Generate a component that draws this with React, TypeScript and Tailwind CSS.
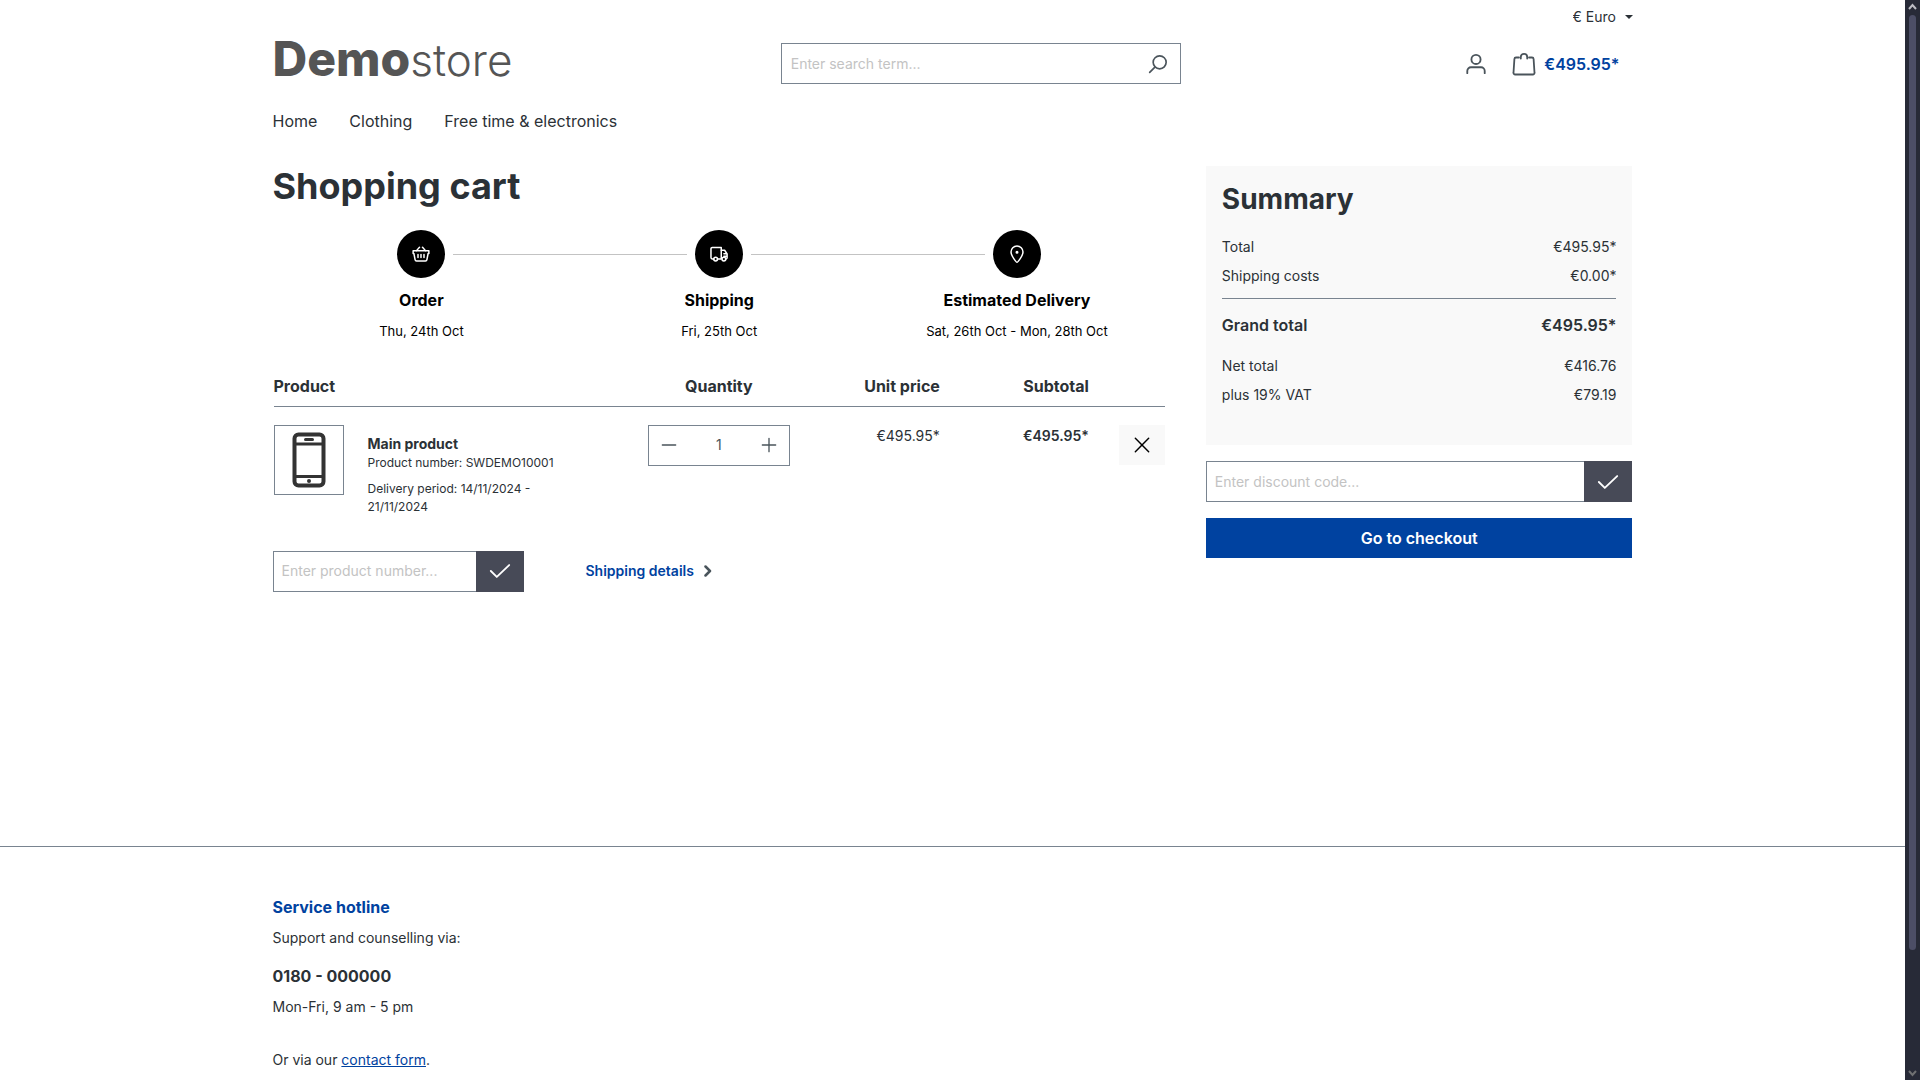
import { useState } from "react";
import type { ReactNode, SVGProps } from "react";

const Icon = ({
  size = 22,
  children,
  ...props
}: { size?: number; children: ReactNode } & SVGProps<SVGSVGElement>) => (
  <svg
    width={size}
    height={size}
    viewBox="0 0 24 24"
    fill="none"
    stroke="currentColor"
    strokeWidth="2"
    strokeLinecap="round"
    strokeLinejoin="round"
    aria-hidden="true"
    {...props}
  >
    {children}
  </svg>
);

const SearchIcon = () => (
  <Icon size={20}>
    <circle cx="14" cy="10" r="7.8" />
    <path d="M8.3 15.7L2 22" />
  </Icon>
);

const AvatarIcon = () => (
  <Icon>
    <circle cx="12" cy="7" r="5" />
    <path d="M2.5 22v-2.5a4 4 0 0 1 4-4h11a4 4 0 0 1 4 4V22" />
  </Icon>
);

const BagIcon = () => (
  <Icon size={24} strokeWidth="1.8">
    <path d="M7 5.5H4A1.6 1.6 0 0 0 2.4 7L1.5 20.7a1.6 1.6 0 0 0 1.6 1.8h17.8a1.6 1.6 0 0 0 1.6-1.8L21.6 7A1.6 1.6 0 0 0 20 5.5h-3" />
    <path d="M8.8 6.5V5a3.2 3.2 0 0 1 6.4 0v1.5" />
  </Icon>
);

const BasketIcon = () => (
  <Icon size={18}>
    <path d="M1.5 7.5h21v3.7h-1l-1.6 8.3a2 2 0 0 1-2 1.7H6.1a2 2 0 0 1-2-1.7L2.5 11.2h-1z" />
    <path d="M6 7.5L10 3M18 7.5L14 3M8 12.5v4M12 12.5v4M16 12.5v4" />
  </Icon>
);

const TruckIcon = () => (
  <Icon size={18}>
    <path d="M5 18.5H3a1.7 1.7 0 0 1-1.7-1.7V5A1.7 1.7 0 0 1 3 3.3h12v15.2h-5" />
    <path d="M15 7h4.5l3.3 5v5a1.5 1.5 0 0 1-1 1.5M18.5 11.5h4M18.5 15h4" />
    <circle cx="7.5" cy="18.8" r="2.5" />
    <circle cx="18.5" cy="18.8" r="2.5" />
  </Icon>
);

const PinIcon = () => (
  <Icon size={18}>
    <path d="M12 23C11.2 23 4 14.5 4 9.3a8 8 0 0 1 16 0C20 14.5 12.8 23 12 23z" />
    <circle cx="12" cy="9.5" r="1" />
  </Icon>
);

const CheckIcon = () => (
  <Icon>
    <path d="M2 12l6.5 6.5L22 5.5" />
  </Icon>
);

const PhoneIcon = () => (
  <svg width="34" height="56" viewBox="0 0 34 56" fill="none" stroke="#333" aria-hidden="true">
    <rect x="2.5" y="2.5" width="29" height="51" rx="4" strokeWidth="4" />
    <path d="M2 12h30M2 44.5h30" strokeWidth="3" />
    <path d="M13.5 7.5h7" strokeWidth="3" strokeLinecap="round" />
    <circle cx="17" cy="49" r="2" fill="#333" stroke="none" />
  </svg>
);

const steps = [
  { title: "Order", date: "Thu, 24th Oct", icon: <BasketIcon /> },
  { title: "Shipping", date: "Fri, 25th Oct", icon: <TruckIcon /> },
  { title: "Estimated Delivery", date: "Sat, 26th Oct - Mon, 28th Oct", icon: <PinIcon /> },
];

interface CodeFieldProps {
  placeholder: string;
  label: string;
  buttonLabel: string;
}

const CodeField = ({ placeholder, label, buttonLabel }: CodeFieldProps) => (
  <form className="flex h-[41px]" onSubmit={(e) => e.preventDefault()}>
    <input
      type="text"
      aria-label={label}
      placeholder={placeholder}
      className="min-w-0 flex-1 border border-r-0 border-[#798490] px-2 text-sm outline-none placeholder:text-[#c3c3c3]"
    />
    <button
      type="submit"
      aria-label={buttonLabel}
      className="flex w-12 items-center justify-center bg-[#474a57] text-white"
    >
      <CheckIcon />
    </button>
  </form>
);

const Header = () => (
  <header className="mx-auto max-w-[1400px] px-5">
    <div className="flex h-[34px] items-center justify-end gap-2">
      <select aria-label="Currency" className="appearance-none bg-transparent text-sm outline-none">
        <option>€ Euro</option>
      </select>
      <span className="border-x-4 border-t-4 border-x-transparent border-t-[#2b3136]" />
    </div>
    <div className="grid h-[58px] grid-cols-[9fr_400px_8fr] items-center">
      <a href="#" className="pb-2 text-5xl leading-[50px] text-[#555]">
        <span className="font-extrabold">Demo</span>
        <span className="text-[44px] font-light">store</span>
      </a>
      <form
        className="flex h-[41px] border border-[#798490]"
        onSubmit={(e) => e.preventDefault()}
      >
        <input
          type="search"
          aria-label="Search"
          placeholder="Enter search term..."
          className="min-w-0 flex-1 px-[9px] text-sm outline-none placeholder:text-[#c3c3c3]"
        />
        <button type="submit" aria-label="Submit search" className="px-3 text-[#4a545b]">
          <SearchIcon />
        </button>
      </form>
      <div className="flex items-center justify-end gap-[25px] pr-[13px] text-[#4a545b]">
        <button aria-label="Your account">
          <AvatarIcon />
        </button>
        <a href="#" className="flex items-center gap-2">
          <BagIcon />
          <span className="font-semibold text-[#0042a0]">€495.95*</span>
        </a>
      </div>
    </div>
    <nav className="flex gap-8 pt-[17px] leading-6">
      <a href="#">Home</a>
      <a href="#">Clothing</a>
      <a href="#">Free time &amp; electronics</a>
    </nav>
  </header>
);

const Steps = () => (
  <ol className="grid grid-cols-3 text-center text-black">
    {steps.map((step, i) => (
      <li key={step.title}>
        <div className="flex items-center gap-2">
          <span className={`h-px flex-1 ${i > 0 ? "bg-[#c3c3c3]" : ""}`} />
          <span className="flex size-12 items-center justify-center rounded-full bg-black text-white">
            {step.icon}
          </span>
          <span className={`h-px flex-1 ${i < steps.length - 1 ? "bg-[#c3c3c3]" : ""}`} />
        </div>
        <h2 className="pt-2.5 font-bold leading-6">{step.title}</h2>
        <p className="pt-2 text-[13px] leading-[22px]">{step.date}</p>
      </li>
    ))}
  </ol>
);

const CartTable = () => {
  const [quantity, setQuantity] = useState(1);

  return (
    <table className="w-full table-fixed">
      <colgroup>
        <col />
        <col className="w-[172px]" />
        <col className="w-[150px]" />
        <col className="w-[149px]" />
        <col className="w-[61px]" />
      </colgroup>
      <thead>
        <tr className="h-8 border-b border-[#798490] align-top leading-6">
          <th className="text-left font-bold">Product</th>
          <th className="font-bold">Quantity</th>
          <th className="pr-[15px] text-right font-bold">Unit price</th>
          <th className="pr-[15px] text-right font-bold">Subtotal</th>
          <td />
        </tr>
      </thead>
      <tbody>
        <tr className="align-top text-sm">
          <td className="pt-[18px]">
            <div className="flex gap-6">
              <div className="flex size-[70px] shrink-0 items-center justify-center border border-[#798490]">
                <PhoneIcon />
              </div>
              <div className="w-[200px] pt-[9px] text-xs leading-[18px]">
                <a href="#" className="block text-sm font-bold leading-5">
                  Main product
                </a>
                <p>Product number: SWDEMO10001</p>
                <p className="pt-2">Delivery period: 14/11/2024 - 21/11/2024</p>
              </div>
            </div>
          </td>
          <td className="px-[15px] pt-[18px]">
            <div className="flex h-[41px] border border-[#798490] text-[#4a545b]">
              <button
                aria-label="Decrease quantity"
                className="flex w-10 shrink-0 items-center justify-center"
                onClick={() => setQuantity(Math.max(1, quantity - 1))}
              >
                <Icon size={16}>
                  <path d="M2 12h20" />
                </Icon>
              </button>
              <input
                type="text"
                aria-label="Quantity"
                className="min-w-0 flex-1 text-center text-sm outline-none"
                value={quantity}
                onChange={(e) => setQuantity(Number(e.target.value) || 1)}
              />
              <button
                aria-label="Increase quantity"
                className="flex w-10 shrink-0 items-center justify-center"
                onClick={() => setQuantity(quantity + 1)}
              >
                <Icon size={16}>
                  <path d="M2 12h20M12 2v20" />
                </Icon>
              </button>
            </div>
          </td>
          <td className="pr-[15px] pt-[18px] text-right leading-[22px]">€495.95*</td>
          <td className="pr-[15px] pt-[18px] text-right font-semibold leading-[22px]">€495.95*</td>
          <td className="pl-[15px] pt-[18px]">
            <button
              aria-label="Remove product"
              className="flex h-10 w-full items-center justify-center bg-[#f9f9f9] text-black"
            >
              <Icon size={16} strokeWidth="2.2">
                <path d="M2 2l20 20M22 2L2 22" />
              </Icon>
            </button>
          </td>
        </tr>
      </tbody>
    </table>
  );
};

const SummaryRow = ({ label, value }: { label: string; value: string }) => (
  <div className="flex justify-between py-1 text-sm leading-[21px]">
    <dt>{label}</dt>
    <dd>{value}</dd>
  </div>
);

const Summary = () => (
  <aside className="pt-[33px]">
    <section className="bg-[#f9f9f9] px-4 pb-9 pt-4">
      <h2 className="text-[28px] font-bold leading-[34px]">Summary</h2>
      <dl className="pt-4">
        <SummaryRow label="Total" value="€495.95*" />
        <SummaryRow label="Shipping costs" value="€0.00*" />
        <div className="mt-2 flex justify-between border-t border-[#798490] py-3.5 font-semibold leading-6">
          <dt>Grand total</dt>
          <dd>€495.95*</dd>
        </div>
        <SummaryRow label="Net total" value="€416.76" />
        <SummaryRow label="plus 19% VAT" value="€79.19" />
      </dl>
    </section>
    <div className="flex flex-col gap-4 pt-4">
      <CodeField
        label="Discount code"
        placeholder="Enter discount code..."
        buttonLabel="Redeem code"
      />
      <button className="h-10 bg-[#0042a0] font-semibold text-white">Go to checkout</button>
    </div>
  </aside>
);

const Footer = () => (
  <footer className="border-t border-[#798490]">
    <div className="mx-auto max-w-[1400px] px-5 pt-12 text-sm leading-[21px]">
      <h2 className="text-base font-bold leading-6 text-[#0042a0]">Service hotline</h2>
      <p className="pt-2">Support and counselling via:</p>
      <a href="#" className="block pt-4 text-base font-bold leading-6">
        0180 - 000000
      </a>
      <p className="pt-2">Mon-Fri, 9 am - 5 pm</p>
      <p className="pt-8">
        Or via our{" "}
        <a href="#" className="text-[#0042a0] underline">
          contact form
        </a>
        .
      </p>
    </div>
  </footer>
);

const ScrollBar = () => (
  <div className="flex w-[15px] shrink-0 flex-col items-center bg-[#272a37]" aria-hidden="true">
    <svg width="15" height="15" viewBox="0 0 15 15" fill="none" stroke="#bdbdc4" strokeWidth="2">
      <path d="M4 9l3.5-4L11 9" />
    </svg>
    <div className="w-[7px] flex-[935] rounded-full bg-[#4c4e66]" />
    <div className="flex-[115]" />
    <svg width="15" height="15" viewBox="0 0 15 15" fill="none" stroke="#6f7072" strokeWidth="2">
      <path d="M4 6l3.5 4L11 6" />
    </svg>
  </div>
);

export default function App() {
  return (
    <div className="flex h-screen bg-white font-['Inter',sans-serif] text-base text-[#2b3136]">
      <div className="min-w-0 flex-1 overflow-hidden">
        <Header />
        <main className="mx-auto grid min-h-[713px] max-w-[1400px] grid-cols-[67fr_32fr] content-start gap-x-10 px-5">
          <div className="pt-8">
            <h1 className="text-4xl font-bold leading-[42px]">Shopping cart</h1>
            <div className="pt-[23px]">
              <Steps />
            </div>
            <div className="px-px pt-8">
              <CartTable />
            </div>
            <div className="flex items-center gap-[62px] pt-[35px]">
              <div className="w-[251px]">
                <CodeField
                  label="Product number"
                  placeholder="Enter product number..."
                  buttonLabel="Add product"
                />
              </div>
              <button className="flex items-center gap-2 text-sm font-semibold text-[#0042a0]">
                Shipping details
                <Icon size={12} strokeWidth="5" className="text-[#4a545b]">
                  <path d="M7 3l9 9-9 9" />
                </Icon>
              </button>
            </div>
          </div>
          <Summary />
        </main>
        <Footer />
      </div>
      <ScrollBar />
    </div>
  );
}
